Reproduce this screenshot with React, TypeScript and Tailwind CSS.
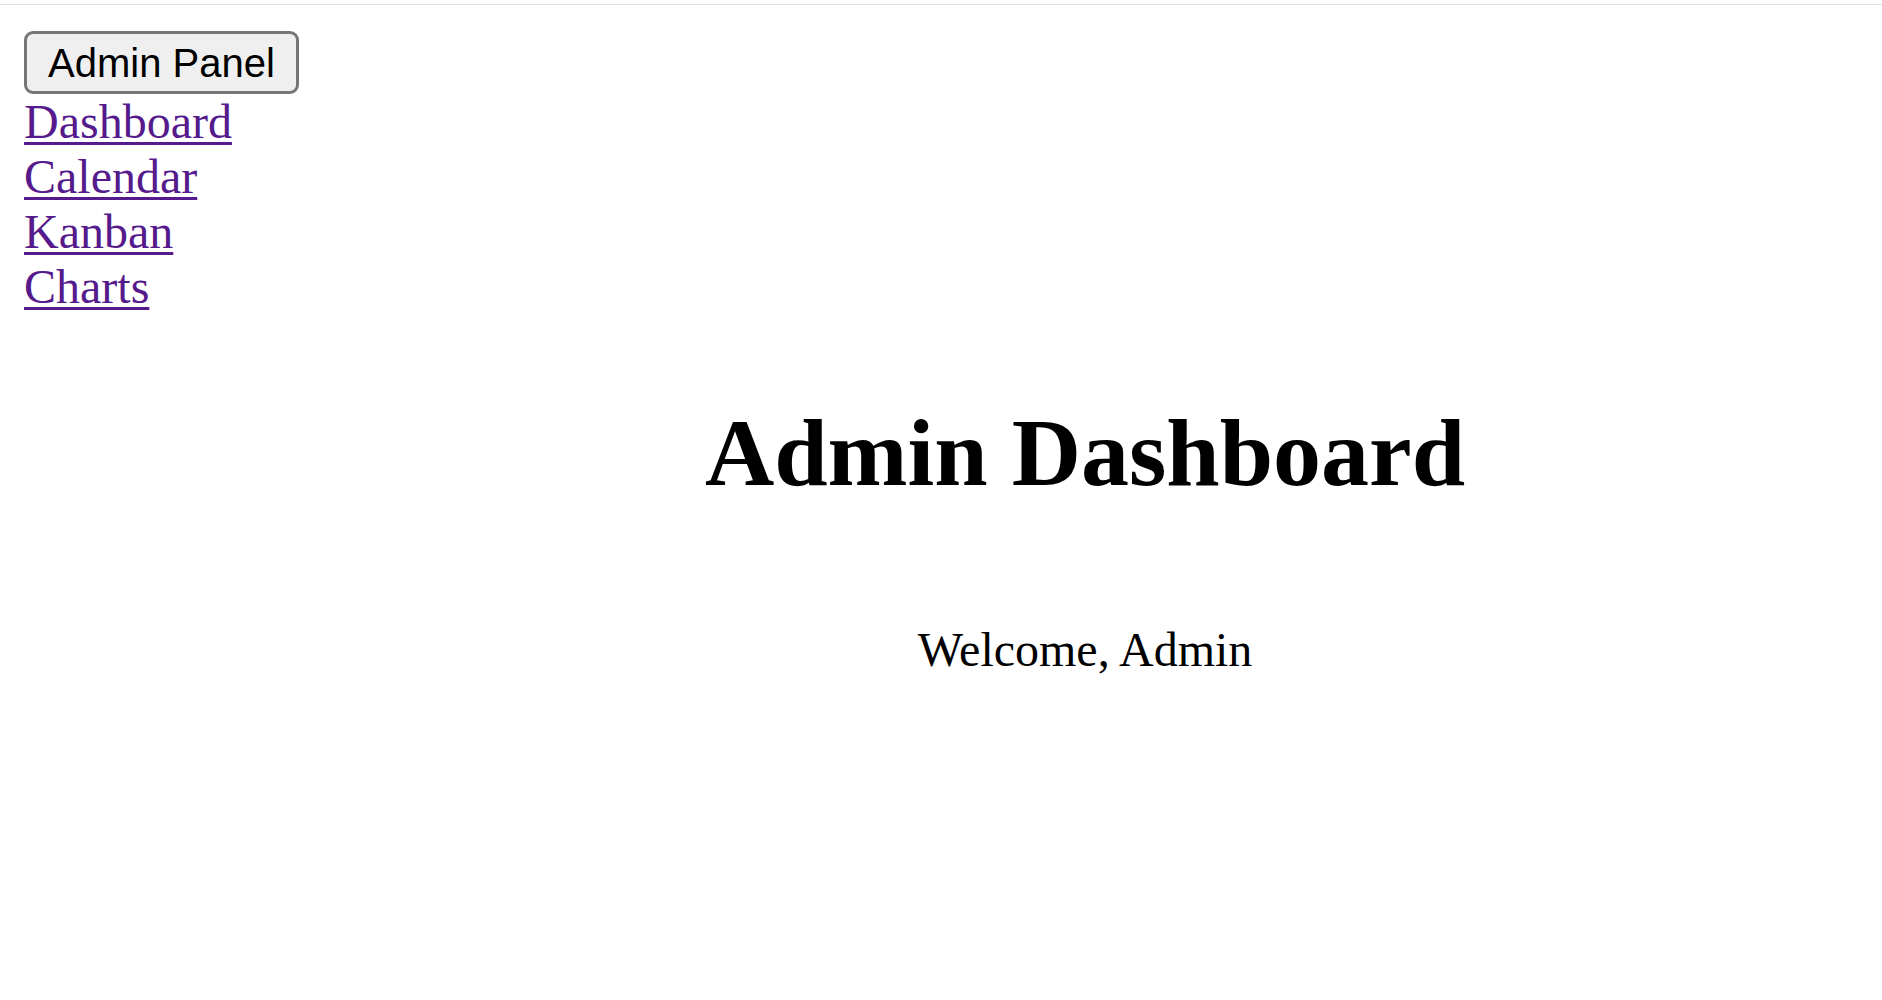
import React from "react";

export default function App() {
  return (
    <div className="min-h-[1000px] bg-white text-black" style={{ fontFamily: '"Liberation Serif", "Times New Roman", serif' }}>
      <div className="h-[5px] border-b border-[#e0e0e0]" />
      <div className="flex">
        <aside className="w-[288px] shrink-0 pl-[24px] pt-[26px]">
          <button
            type="button"
            className="h-[63px] whitespace-nowrap px-[21px] rounded-[9px] border-[3px] border-[#767676] bg-[#efefef] text-[40px] leading-[46px] text-black"
            style={{ fontFamily: '"Liberation Sans", Arial, sans-serif' }}
          >
            Admin Panel
          </button>
          <nav className="flex flex-col items-start">
            {["Dashboard", "Calendar", "Kanban", "Charts"].map((l) => (
              <a
                key={l}
                href="#"
                className="block text-[48px] leading-[55px] text-[#551a8b] underline decoration-[3px] underline-offset-[4px]"
              >
                {l}
              </a>
            ))}
          </nav>
        </aside>
        <main className="flex-1 flex flex-col items-center pt-[393px]">
          <h1 className="text-[96px] leading-[110px] font-bold">Admin Dashboard</h1>
          <p className="mt-[114px] text-[48px] leading-[55px]">Welcome, Admin</p>
        </main>
      </div>
    </div>
  );
}
